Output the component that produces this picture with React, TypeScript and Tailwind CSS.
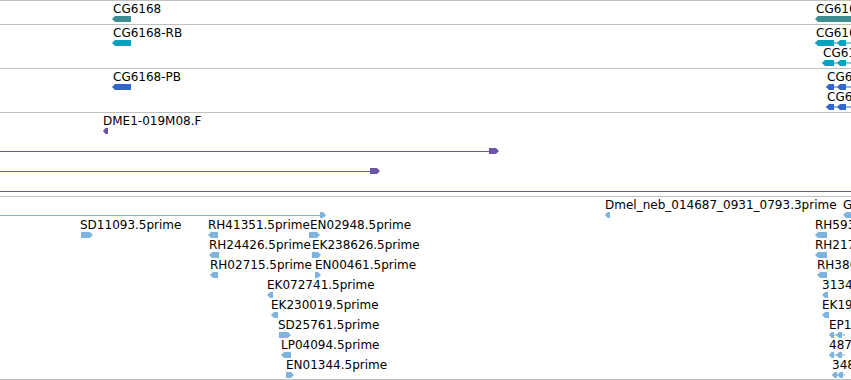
import React from "react";

const TEAL = "#3d8e90";
const CYAN = "#0aa0c0";
const BLUE = "#3366cc";
const PURPLE = "#6c55a3";
const EST = "#80b4dc";

type Dir = "l" | "r";

type Feat = {
  x: number;
  y: number;
  label: string;
  gx: number;
  glyph: React.ReactNode;
};

function Block({ w, dir, color, h = 6 }: { w: number; dir: Dir; color: string; h?: number }) {
  const p = Math.min(3, w / 2);
  const pts =
    dir === "l"
      ? `0,${h / 2} ${p},0 ${w},0 ${w},${h} ${p},${h}`
      : `0,0 ${w - p},0 ${w},${h / 2} ${w - p},${h} 0,${h}`;
  return (
    <svg width={w} height={h} className="block">
      <polygon points={pts} fill={color} />
    </svg>
  );
}

// gene model: thin intron line with left-pointing exons
function Model({ color, exons, w }: { color: string; exons: [number, number][]; w: number }) {
  return (
    <svg width={w} height={6} className="block">
      <rect x={0} y={2.5} width={w} height={1} fill={color} />
      {exons.map(([a, b], i) => {
        const p = Math.min(3, (b - a) / 2);
        return (
          <polygon key={i} points={`${a},3 ${a + p},0 ${b},0 ${b},6 ${a + p},6`} fill={color} />
        );
      })}
    </svg>
  );
}

function Feature({ f }: { f: Feat }) {
  return (
    <>
      <span
        className="absolute whitespace-nowrap text-[12px] leading-[14px] text-black"
        style={{ left: f.x, top: f.y - 1 }}
      >
        {f.label}
      </span>
      <div className="absolute" style={{ left: f.gx, top: f.y + 13 }}>
        {f.glyph}
      </div>
    </>
  );
}

function Line({ y, w, color, head }: { y: number; w: number; color: string; head?: number }) {
  return (
    <div className="absolute left-0 flex items-center" style={{ top: y - 3 }}>
      <div className="h-px" style={{ width: w, background: color }} />
      {head ? <Block w={head} dir="r" color={color} /> : null}
    </div>
  );
}

const geneTrack: Feat[] = [
  { x: 113, y: 2, label: "CG6168", gx: 112, glyph: <Block w={19} dir="l" color={TEAL} /> },
  { x: 816, y: 2, label: "CG6168", gx: 815, glyph: <Block w={45} dir="l" color={TEAL} /> },
];

const rnaTrack: Feat[] = [
  { x: 113, y: 2, label: "CG6168-RB", gx: 112, glyph: <Block w={19} dir="l" color={CYAN} /> },
  { x: 816, y: 2, label: "CG6168-RB", gx: 815, glyph: <Model color={CYAN} w={50} exons={[[0, 19], [22, 31], [38, 50]]} /> },
  { x: 823, y: 22, label: "CG6168-RA", gx: 822, glyph: <Model color={CYAN} w={40} exons={[[0, 12], [15, 24], [31, 40]]} /> },
];

const protTrack: Feat[] = [
  { x: 113, y: 2, label: "CG6168-PB", gx: 112, glyph: <Block w={19} dir="l" color={BLUE} /> },
  { x: 827, y: 2, label: "CG6168-PB", gx: 826, glyph: <Model color={BLUE} w={40} exons={[[0, 8], [11, 20], [27, 40]]} /> },
  { x: 827, y: 22, label: "CG6168-PA", gx: 826, glyph: <Model color={BLUE} w={40} exons={[[0, 8], [11, 20], [27, 40]]} /> },
];

const estTrack: Feat[] = [
  { x: 605, y: 2, label: "Dmel_neb_014687_0931_0793.3prime", gx: 605, glyph: <Block w={5} dir="l" color={EST} /> },
  { x: 843, y: 2, label: "GH04512.3prime", gx: 843, glyph: <Block w={10} dir="l" color={EST} /> },
  { x: 80, y: 22, label: "SD11093.5prime", gx: 81, glyph: <Block w={12} dir="r" color={EST} /> },
  { x: 208, y: 22, label: "RH41351.5prime", gx: 208, glyph: <Block w={10} dir="l" color={EST} /> },
  { x: 310, y: 22, label: "EN02948.5prime", gx: 309, glyph: <Block w={11} dir="r" color={EST} /> },
  { x: 209, y: 42, label: "RH24426.5prime", gx: 209, glyph: <Block w={10} dir="l" color={EST} /> },
  { x: 312, y: 42, label: "EK238626.5prime", gx: 312, glyph: <Block w={9} dir="r" color={EST} /> },
  { x: 210, y: 62, label: "RH02715.5prime", gx: 210, glyph: <Block w={8} dir="l" color={EST} /> },
  { x: 315, y: 62, label: "EN00461.5prime", gx: 315, glyph: <Block w={6} dir="r" color={EST} /> },
  { x: 267, y: 82, label: "EK072741.5prime", gx: 267, glyph: <Block w={6} dir="l" color={EST} /> },
  { x: 271, y: 102, label: "EK230019.5prime", gx: 271, glyph: <Block w={7} dir="l" color={EST} /> },
  { x: 278, y: 122, label: "SD25761.5prime", gx: 279, glyph: <Block w={12} dir="r" color={EST} /> },
  { x: 281, y: 142, label: "LP04094.5prime", gx: 281, glyph: <Block w={10} dir="l" color={EST} /> },
  { x: 286, y: 162, label: "EN01344.5prime", gx: 286, glyph: <Block w={8} dir="r" color={EST} /> },
  { x: 815, y: 22, label: "RH59340.5prime", gx: 815, glyph: <Block w={12} dir="l" color={EST} /> },
  { x: 815, y: 42, label: "RH21770.5prime", gx: 815, glyph: <Block w={12} dir="l" color={EST} /> },
  { x: 817, y: 62, label: "RH38012.5prime", gx: 817, glyph: <Block w={10} dir="l" color={EST} /> },
  { x: 822, y: 82, label: "313420.5prime", gx: 822, glyph: <Block w={6} dir="l" color={EST} /> },
  { x: 822, y: 102, label: "EK192847.5prime", gx: 822, glyph: <Block w={7} dir="l" color={EST} /> },
  { x: 829, y: 122, label: "EP1097.5prime", gx: 829, glyph: <Model color={EST} w={16} exons={[[0, 5], [7, 13]]} /> },
  { x: 829, y: 142, label: "487321.5prime", gx: 829, glyph: <Model color={EST} w={16} exons={[[0, 5], [7, 13]]} /> },
  { x: 832, y: 162, label: "348127.5prime", gx: 832, glyph: <Model color={EST} w={13} exons={[[0, 5], [5, 11]]} /> },
];

export default function App() {
  return (
    <div className="w-[851px] h-[380px] overflow-hidden bg-white font-['DejaVu_Sans',sans-serif] flex flex-col">
      <div className="relative h-[24px] shrink-0 border-t border-[#c0c0c0]">
        {geneTrack.map((f, i) => <Feature key={i} f={f} />)}
      </div>
      <div className="relative h-[44px] shrink-0 border-t border-[#c0c0c0]">
        {rnaTrack.map((f, i) => <Feature key={i} f={f} />)}
      </div>
      <div className="relative h-[44px] shrink-0 border-t border-[#c0c0c0]">
        {protTrack.map((f, i) => <Feature key={i} f={f} />)}
      </div>
      <div className="relative h-[84px] shrink-0 border-t border-[#c0c0c0]">
        <Feature
          f={{ x: 103, y: 2, label: "DME1-019M08.F", gx: 103, glyph: <Block w={5} dir="l" color={PURPLE} /> }}
        />
        <Line y={38} w={489} color={PURPLE} head={10} />
        <Line y={58} w={370} color={PURPLE} head={10} />
        <div className="absolute left-0 right-0 top-[78px] h-px bg-[#6c55a3]" />
      </div>
      <div className="relative h-[184px] shrink-0 border-y border-[#c0c0c0]">
        <Line y={18} w={320} color={EST} head={6} />
        {estTrack.map((f, i) => <Feature key={i} f={f} />)}
      </div>
    </div>
  );
}
